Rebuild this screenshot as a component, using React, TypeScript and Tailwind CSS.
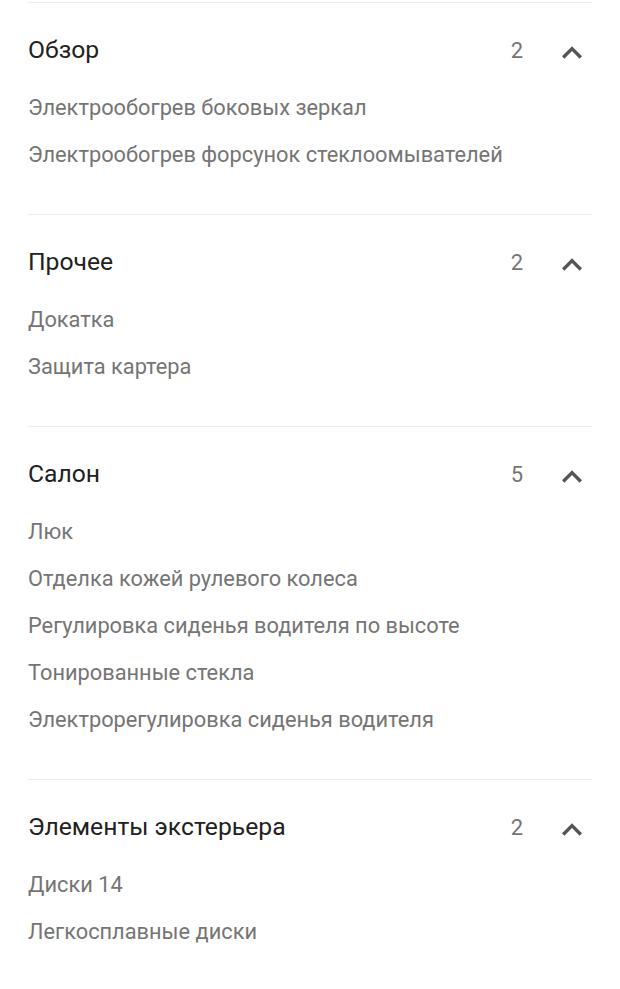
import React from 'react';

type Group = {
    title: string;
    items: string[];
};

const groups: Group[] = [
    {
        title: 'Обзор',
        items: ['Электрообогрев боковых зеркал', 'Электрообогрев форсунок стеклоомывателей']
    },
    {
        title: 'Прочее',
        items: ['Докатка', 'Защита картера']
    },
    {
        title: 'Салон',
        items: [
            'Люк',
            'Отделка кожей рулевого колеса',
            'Регулировка сиденья водителя по высоте',
            'Тонированные стекла',
            'Электрорегулировка сиденья водителя'
        ]
    },
    {
        title: 'Элементы экстерьера',
        items: ['Диски 14', 'Легкосплавные диски']
    }
];

// material "expand less" chevron
const ExpandLess = () => (
    <svg viewBox="0 0 24 24" className="h-10 w-10 fill-[#555555]">
        <path d="M12 8l-6 6 1.41 1.41L12 10.83l4.59 4.58L18 14z" />
    </svg>
);

const OptionGroup = ({ group }: { group: Group }) => (
    <section className="border-t border-[#ececec] pb-[35px]">
        <div className="mt-[12px] flex h-[70px] items-center">
            <h2 className="flex-1 text-[24.7px] text-[#212121]">{group.title}</h2>
            <span className="text-[22px] text-[#757575]">{group.items.length}</span>
            <div className="ml-[29px] flex items-center pt-[6px]">
                <ExpandLess />
            </div>
        </div>
        <ul>
            {group.items.map((item) => (
                <li key={item} className="flex h-[47px] items-center text-[21.8px] text-[#757575]">
                    {item}
                </li>
            ))}
        </ul>
    </section>
);

const App = () => {
    return (
        <div className="min-h-screen bg-white px-[28px] pt-[2px] font-['Roboto',sans-serif]">
            {groups.map((g) => (
                <OptionGroup key={g.title} group={g} />
            ))}
        </div>
    );
};

export default App;
